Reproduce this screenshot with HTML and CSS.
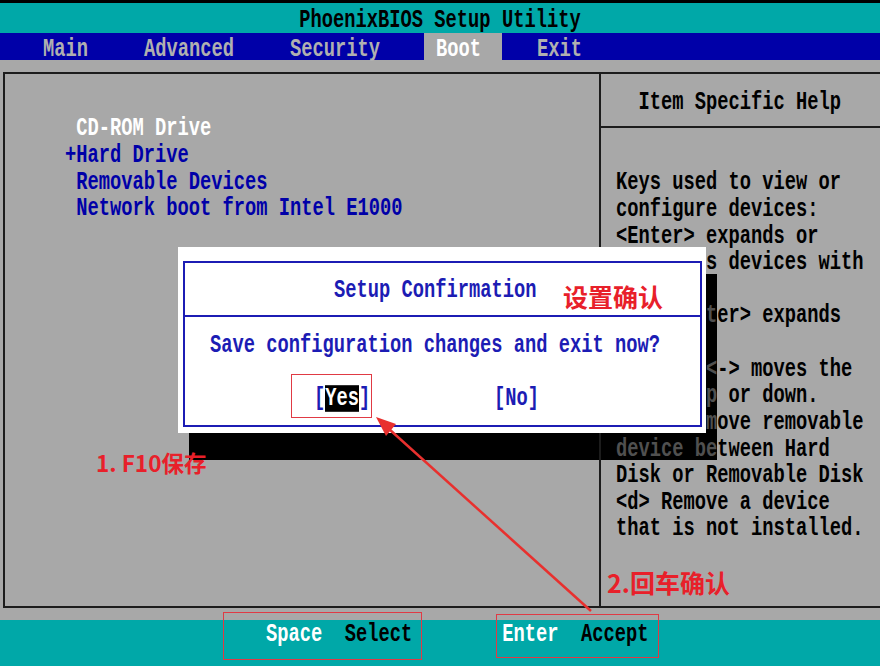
FILE: index.html
```html
<!DOCTYPE html>
<html lang="zh">
<head>
<meta charset="utf-8">
<title>PhoenixBIOS Setup Utility</title>
<link rel="stylesheet" href="styles.css">
</head>
<body>
<div class="screen">
  <div class="topline"></div>
  <div class="titlebar"><span class="tx">PhoenixBIOS Setup Utility</span></div>
  <nav class="menubar">
    <span class="tab"><span class="tx">Main</span></span>
    <span class="tab"><span class="tx">Advanced</span></span>
    <span class="tab"><span class="tx">Security</span></span>
    <span class="tab active"><span class="tx">Boot</span></span>
    <span class="tab"><span class="tx">Exit</span></span>
  </nav>
  <div class="workarea">
    <div class="panel">
      <div class="bootlist">
        <div class="row"><span class="tx cur"> CD-ROM Drive</span></div>
        <div class="row"><span class="tx">+Hard Drive</span></div>
        <div class="row"><span class="tx"> Removable Devices</span></div>
        <div class="row"><span class="tx"> Network boot from Intel E1000</span></div>
      </div>
      <div class="help">
        <div class="helphead"><span class="tx">  Item Specific Help</span></div>
        <div class="helpbody">
          <div class="row"><span class="tx">Keys used to view or</span></div>
          <div class="row"><span class="tx">configure devices:</span></div>
          <div class="row"><span class="tx">&lt;Enter&gt; expands or</span></div>
          <div class="row"><span class="tx">        s devices with</span></div>
          <div class="row"><span class="tx"> </span></div>
          <div class="row"><span class="tx">        <span class="sh">t</span>er&gt; expands</span></div>
          <div class="row"><span class="tx"> </span></div>
          <div class="row"><span class="tx">        <span class="sh">&lt;</span>-&gt; moves the</span></div>
          <div class="row"><span class="tx">        <span class="sh">p</span> or down.</span></div>
          <div class="row"><span class="tx">        <span class="sh">m</span>ove removable</span></div>
          <div class="row"><span class="tx"><span class="sh">device be</span>tween Hard</span></div>
          <div class="row"><span class="tx">Disk or Removable Disk</span></div>
          <div class="row"><span class="tx">&lt;d&gt; Remove a device</span></div>
          <div class="row"><span class="tx">that is not installed.</span></div>
        </div>
      </div>
    </div>
  </div>
  <div class="keybar">
    <div class="row"><span class="tx"><span class="key">Space</span>  Select        <span class="key">Enter</span>  Accept</span></div>
  </div>

  <div class="shadow"></div>
  <div class="dialog">
    <div class="frame">
      <div class="dhead"><span class="tx">Setup Confirmation</span></div>
      <div class="dbody">
        <div class="drow"><span class="tx">Save configuration changes and exit now?</span></div>
        <div class="drow choice"><span class="tx">[<span class="hl">Yes</span>]           [No]</span></div>
      </div>
    </div>
  </div>

  <div class="note note-title">设置确认</div>
  <div class="note note-f10">1. F10保存</div>
  <div class="note note-enter">2.回车确认</div>
  <div class="mark mark-yes"></div>
  <div class="mark mark-space"></div>
  <div class="mark mark-enter"></div>
  <svg class="arrow" width="880" height="666" viewBox="0 0 880 666">
    <line x1="591" y1="611" x2="389" y2="429" stroke="#e8302e" stroke-width="2.5"/>
    <polygon points="376,417 396,424 386,436" fill="#e8302e"/>
  </svg>
</div>
</body>
</html>
```

FILE: styles.css
```css
* { box-sizing: border-box; margin: 0; padding: 0; }
html, body { width: 880px; height: 666px; overflow: hidden; }
body {
  background: #a8a8a8;
  font-family: "Liberation Mono", "DejaVu Sans Mono", monospace;
  font-size: 18.75px;
  font-weight: 700;
}
.screen { position: relative; width: 880px; height: 666px; overflow: hidden; }

.tx {
  display: inline-block;
  white-space: pre;
  line-height: 18px;
  transform: translateY(1px) scaleY(1.4);
}
.row { display: flex; align-items: center; height: 26.64px; }

.topline { height: 3px; background: #000; }
.titlebar {
  height: 30px;
  padding-top: 2px;
  background: #00a8a8;
  color: #000;
  display: flex;
  align-items: center;
  justify-content: center;
}
.menubar {
  height: 27px;
  padding: 2px 0 0 31px;
  background: #0000a8;
  display: flex;
  gap: 23px;
}
.tab { display: flex; align-items: center; padding: 0 21px 0 12px; color: #b0b0b0; margin-top: -2px; padding-top: 2px; }
.tab.active { background: #a8a8a8; color: #fff; }

.workarea { height: 560px; padding: 12px 0 0 3px; }
.panel {
  display: flex;
  width: 920px;
  height: 536px;
  border: 2px solid #1c1c1c;
}
.bootlist { width: 594px; padding: 40px 0 0 60px; color: #0000a8; }
.cur { color: #fff; }
.help {
  position: relative;
  z-index: 2;
  flex: 1;
  border-left: 2px solid #1c1c1c;
  color: #000;
}
.helphead {
  height: 54px;
  border-bottom: 2px solid #1c1c1c;
  padding: 1px 0 0 15px;
  display: flex;
  align-items: center;
}
.helpbody { padding: 40px 0 0 15px; }
.sh { color: #505050; }

.keybar { height: 46px; background: #00a8a8; padding-left: 266px; color: #000; }
.key { color: #fff; }

.shadow {
  position: absolute;
  z-index: 1;
  left: 189px;
  top: 274px;
  width: 528px;
  height: 186px;
  background: #000;
}
.dialog {
  position: absolute;
  z-index: 3;
  left: 178px;
  top: 247px;
  width: 528px;
  height: 186px;
  background: #fff;
  padding: 14px 4px 6px 5px;
  color: #1c1cb4;
}
.frame { height: 100%; border: 2px solid #1c1cb4; }
.dhead {
  height: 54px;
  border-bottom: 2px solid #1c1cb4;
  padding-left: 149px;
  display: flex;
  align-items: center;
}
.dbody { padding: 13px 0 0 25px; }
.drow { height: 27px; display: flex; align-items: center; }
.choice { margin-top: 27px; padding-left: 104px; }
.hl { display: inline-block; line-height: 19px; background: #000; color: #fff; }

.note {
  position: absolute;
  z-index: 4;
  font-family: "Noto Sans CJK SC", sans-serif;
  font-weight: 700;
  color: #e8202a;
  line-height: 1;
  white-space: nowrap;
}
.note-title { left: 563px; top: 284px; font-size: 25px; }
.note-f10 { left: 96px; top: 451px; font-size: 22.5px; }
.note-enter { left: 607px; top: 570px; font-size: 25px; }

.mark { position: absolute; z-index: 4; border: 1.5px solid #e03a44; }
.mark-yes { left: 291px; top: 374px; width: 81px; height: 44px; }
.mark-space { left: 223px; top: 612px; width: 199px; height: 48px; }
.mark-enter { left: 496px; top: 614px; width: 163px; height: 44px; }

.arrow { position: absolute; z-index: 5; left: 0; top: 0; pointer-events: none; }
```
